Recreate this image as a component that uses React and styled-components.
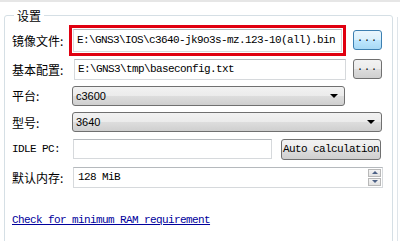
import styled, { createGlobalStyle } from "styled-components"

const GlobalStyle = createGlobalStyle`
  html, body {
    margin: 0;
    padding: 0;
    background: #fff;
    overflow: hidden;
  }
  body {
    font-family: "Noto Sans CJK SC", "Liberation Sans", sans-serif;
  }
`

export default function App() {
  return (
    <Page>
      <GlobalStyle />
      <Body>
        <Group>
          <Title>设置</Title>

          <Row $h={32}>
            <Label>镜像文件:</Label>
            <Highlight>
              <TextInput $w={269} $h={23} readOnly value="E:\GNS3\IOS\c3640-jk9o3s-mz.123-10(all).bin" />
            </Highlight>
            <DotsButton $active>...</DotsButton>
          </Row>

          <Row $h={26}>
            <Label>基本配置:</Label>
            <TextInput $w={272} $h={21} $ml={2} readOnly value="E:\GNS3\tmp\baseconfig.txt" />
            <DotsButton>...</DotsButton>
          </Row>

          <Row $h={27}>
            <Label>平台:</Label>
            <Combo $w={273}>
              <span>c3600</span>
              <Arrow />
            </Combo>
          </Row>

          <Row $h={26}>
            <Label>型号:</Label>
            <Combo $w={310}>
              <span>3640</span>
              <Arrow />
            </Combo>
          </Row>

          <Row $h={28}>
            <Label $mono>IDLE PC:</Label>
            <TextInput $w={199} $h={20} $ml={1} readOnly value="" />
            <AutoButton>Auto calculation</AutoButton>
          </Row>

          <Row $h={28}>
            <Label>默认内存:</Label>
            <Spin>
              <span>128 MiB</span>
              <SpinButtons>
                <SpinBtn><Tri $up /></SpinBtn>
                <SpinBtn><Tri /></SpinBtn>
              </SpinButtons>
            </Spin>
          </Row>

          <Link href="#">Check for minimum RAM requirement</Link>
        </Group>
        <Side />
      </Body>
    </Page>
  )
}

const Page = styled.div`
  width: 400px;
  height: 241px;
  border-top: 2px solid #e6e6e6;
  box-sizing: border-box;
  overflow: hidden;
`
const Body = styled.div`
  display: flex;
  padding-left: 4px;
`
const Group = styled.fieldset`
  margin: 5px 0 0 0;
  width: 389px;
  min-height: 280px;
  box-sizing: border-box;
  border: 1px solid #d5dfe5;
  border-radius: 3px;
  padding: 0 0 0 7px;
  display: flex;
  flex-direction: column;
`
const Title = styled.legend`
  font-size: 12px;
  line-height: 17px;
  padding: 0 3px;
  margin-left: 2px;
  color: #000;
`
const Side = styled.div`
  margin: 15px 0 0 4px;
  width: 2px;
  border-left: 1px solid #dfe5ea;
`
const Row = styled.div`
  display: flex;
  align-items: center;
  height: ${(p) => p.$h}px;
`
const Label = styled.div`
  width: 60px;
  flex-shrink: 0;
  font-size: ${(p) => (p.$mono ? "11px" : "12px")};
  letter-spacing: ${(p) => (p.$mono ? "-0.6px" : "0")};
  font-family: ${(p) => (p.$mono ? '"Liberation Mono", monospace' : '"Noto Sans CJK SC", sans-serif')};
  color: #000;
  white-space: nowrap;
`
const Highlight = styled.div`
  margin-left: -3px;
  border: 3px solid #e00010;
  padding: 1px;
  display: flex;
`
const TextInput = styled.input`
  box-sizing: border-box;
  width: ${(p) => p.$w}px;
  height: ${(p) => p.$h}px;
  margin: 0 0 0 ${(p) => p.$ml || 0}px;
  border: 1px solid #d6d9dc;
  border-top-color: #b5b9bd;
  padding: 0 3px;
  font-family: "Liberation Mono", monospace;
  font-size: 11px;
  letter-spacing: -0.6px;
  color: #000;
  background: #fff;
  outline: none;
`
const DotsButton = styled.button`
  margin-left: 7px;
  width: 29px;
  height: 20px;
  padding: 0 0 3px 0;
  box-sizing: border-box;
  border-radius: 3px;
  border: 1px solid ${(p) => (p.$active ? "#3c7fb1" : "#707070")};
  background: ${(p) =>
    p.$active
      ? "linear-gradient(#eaf6fd 0%, #d9f0fc 50%, #bee6fd 51%, #a7d9f5 100%)"
      : "linear-gradient(#f2f2f2 0%, #ebebeb 50%, #dddddd 51%, #cfcfcf 100%)"};
  font-family: "Liberation Mono", monospace;
  font-size: 10px;
  letter-spacing: 1px;
  color: #000;
`
const Combo = styled.div`
  width: ${(p) => p.$w}px;
  height: 20px;
  box-sizing: border-box;
  border: 1px solid #707070;
  border-radius: 3px;
  background: linear-gradient(#f2f2f2 0%, #ebebeb 50%, #dddddd 51%, #cfcfcf 100%);
  display: flex;
  align-items: center;
  justify-content: space-between;
  padding: 0 6px 0 3px;
  font-family: "Liberation Sans", sans-serif;
  font-size: 11px;
  color: #000;
`
const Arrow = styled.i`
  width: 0;
  height: 0;
  border-left: 4px solid transparent;
  border-right: 4px solid transparent;
  border-top: 4px solid #000;
`
const AutoButton = styled.button`
  margin-left: 9px;
  width: 100px;
  height: 21px;
  box-sizing: border-box;
  padding: 0;
  border-radius: 3px;
  border: 1px solid #707070;
  background: linear-gradient(#f2f2f2 0%, #ebebeb 50%, #dddddd 51%, #cfcfcf 100%);
  font-family: "Liberation Mono", monospace;
  font-size: 11px;
  letter-spacing: -0.6px;
  color: #000;
`
const Spin = styled.div`
  margin-left: 1px;
  width: 310px;
  height: 21px;
  box-sizing: border-box;
  border: 1px solid #d6d9dc;
  border-top-color: #b5b9bd;
  display: flex;
  align-items: center;
  justify-content: space-between;
  padding: 0 1px 0 4px;
  font-family: "Liberation Mono", monospace;
  font-size: 11px;
  letter-spacing: -0.6px;
  color: #000;
`
const SpinButtons = styled.div`
  display: flex;
  flex-direction: column;
  gap: 1px;
`
const SpinBtn = styled.div`
  width: 13px;
  height: 8px;
  box-sizing: border-box;
  border: 1px solid #b8b8b8;
  background: linear-gradient(#f4f4f4, #e2e2e2);
  display: flex;
  align-items: center;
  justify-content: center;
`
const Tri = styled.i`
  width: 0;
  height: 0;
  border-left: 3px solid transparent;
  border-right: 3px solid transparent;
  ${(p) => (p.$up ? "border-bottom: 3px solid #4d6185;" : "border-top: 3px solid #4d6185;")}
`
const Link = styled.a`
  margin-top: 22px;
  font-family: "Liberation Mono", monospace;
  font-size: 11px;
  letter-spacing: -0.6px;
  line-height: 14px;
  color: #00009c;
  text-decoration: underline;
  align-self: flex-start;
`
